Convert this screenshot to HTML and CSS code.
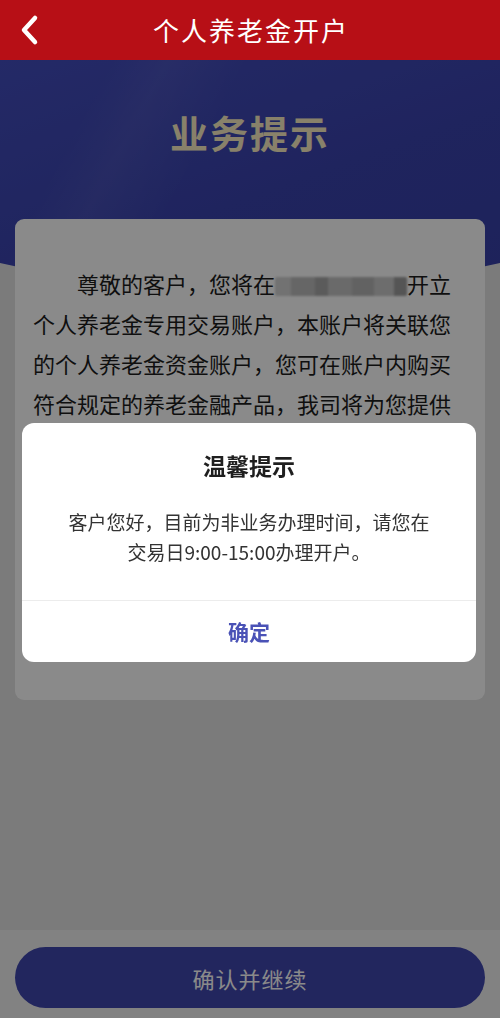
FILE: index.html
```html
<!DOCTYPE html>
<html lang="zh-CN">
<head>
<meta charset="utf-8">
<title>个人养老金开户</title>
<link rel="stylesheet" href="styles.css">
</head>
<body>
<div class="page">
  <header class="nav">
    <span class="back">
      <svg width="24" height="32" viewBox="0 0 24 32"><polyline points="17,4 6,16 17,28" fill="none" stroke="#fff" stroke-width="4.5" stroke-linecap="round" stroke-linejoin="round"/></svg>
    </span>
    <h1 class="nav-title">个人养老金开户</h1>
  </header>
  <section class="hero">
    <h2 class="hero-title">业务提示</h2>
  </section>
  <main class="card">
    <p class="card-text">尊敬的客户，您将在<span class="redact"></span>开立个人养老金专用交易账户，本账户将关联您的个人养老金资金账户，您可在账户内购买符合规定的养老金融产品，我司将为您提供</p>
  </main>
  <div class="spacer"></div>
  <footer class="footer">
    <button class="primary">确认并继续</button>
  </footer>
</div>
<div class="mask">
  <div class="dialog">
    <div class="dialog-body">
      <h3 class="dialog-title">温馨提示</h3>
      <p class="dialog-msg">客户您好，目前为非业务办理时间，请您在交易日9:00-15:00办理开户。</p>
    </div>
    <div class="dialog-btn">确定</div>
  </div>
</div>
</body>
</html>
```

FILE: styles.css
```css
* { box-sizing: border-box; }
html, body { margin: 0; padding: 0; }
body {
  font-family: "Noto Sans CJK SC", "Noto Sans", sans-serif;
  background: #e4e4e4;
  width: 500px;
  height: 1018px;
  overflow: hidden;
}
.page {
  display: flex;
  flex-direction: column;
  height: 1018px;
}
.nav {
  height: 60px;
  background: #b70f16;
  display: flex;
  align-items: center;
  justify-content: center;
  position: relative;
  z-index: 20;
  flex-shrink: 0;
}
.back {
  position: absolute;
  left: 18px;
  top: 14px;
  display: block;
  width: 24px;
  height: 32px;
}
.back svg { display: block; }
.nav-title {
  margin: 0;
  color: #fff;
  font-size: 26px;
  font-weight: 400;
  letter-spacing: 2px;
  line-height: 60px;
  padding-left: 2px;
}
.hero {
  height: 230px;
  flex-shrink: 0;
  background:
    linear-gradient(118deg, rgba(255,255,255,0) 18%, rgba(255,255,255,0.05) 27%, rgba(255,255,255,0) 40%),
    linear-gradient(160deg, #434dbe 0%, #3a43ae 55%, #3840a8 100%);
  clip-path: ellipse(532px 230px at 50% 0);
  text-align: center;
}
.hero-title {
  margin: 0;
  padding-top: 48px;
  font-size: 38px;
  line-height: 48px;
  font-weight: 700;
  color: #fbeec4;
  letter-spacing: 2px;
}
.card {
  margin: -71px 15px 0;
  background: #fff;
  border-radius: 9px;
  padding: 44px 18px 37px;
  height: 481px;
  flex-shrink: 0;
  position: relative;
}
.card-text {
  margin: 0;
  font-size: 22px;
  line-height: 40px;
  color: #1c1c1c;
  text-indent: 2em;
}
.redact {
  display: inline-block;
  width: 132px;
  height: 19px;
  vertical-align: -3px;
  background: linear-gradient(90deg, #d2d2d2 0 12%, #bdbdbd 12% 30%, #a9a9a9 30% 40%, #c4c4c4 40% 58%, #b6b6b6 58% 75%, #c9c9c9 75% 90%, #9e9e9e 90% 100%);
  filter: blur(1.2px);
  border-radius: 2px;
}
.spacer { flex: 1; }
.footer {
  height: 88px;
  flex-shrink: 0;
  background: #f1f1f1;
  padding: 17px 15px 10px;
}
.primary {
  display: block;
  width: 100%;
  height: 61px;
  border: 0;
  border-radius: 31px;
  background: #3f46ae;
  color: #fff;
  font-family: "Noto Sans CJK SC", "Noto Sans", sans-serif;
  font-size: 22px;
  letter-spacing: 1px;
  padding: 0;
}
.mask {
  position: fixed;
  top: 60px;
  left: 0;
  right: 0;
  bottom: 0;
  background: rgba(0,0,0,0.46);
  z-index: 10;
  display: flex;
  justify-content: center;
  align-items: flex-start;
  padding-top: 363px;
}
.dialog {
  width: 454px;
  margin-left: -2px;
  background: #fff;
  border-radius: 12px;
  overflow: hidden;
}
.dialog-body {
  padding: 26px 20px 33px;
  text-align: center;
}
.dialog-title {
  margin: 0;
  font-size: 23px;
  line-height: 32px;
  font-weight: 700;
  color: #1f1f1f;
}
.dialog-msg {
  margin: 26px 0 0;
  padding: 0 22px;
  font-size: 19px;
  line-height: 30px;
  color: #333;
}
.dialog-btn {
  border-top: 1px solid #ececec;
  height: 62px;
  line-height: 60px;
  text-align: center;
  color: #4a52b6;
  font-size: 21px;
  font-weight: 700;
}
```
